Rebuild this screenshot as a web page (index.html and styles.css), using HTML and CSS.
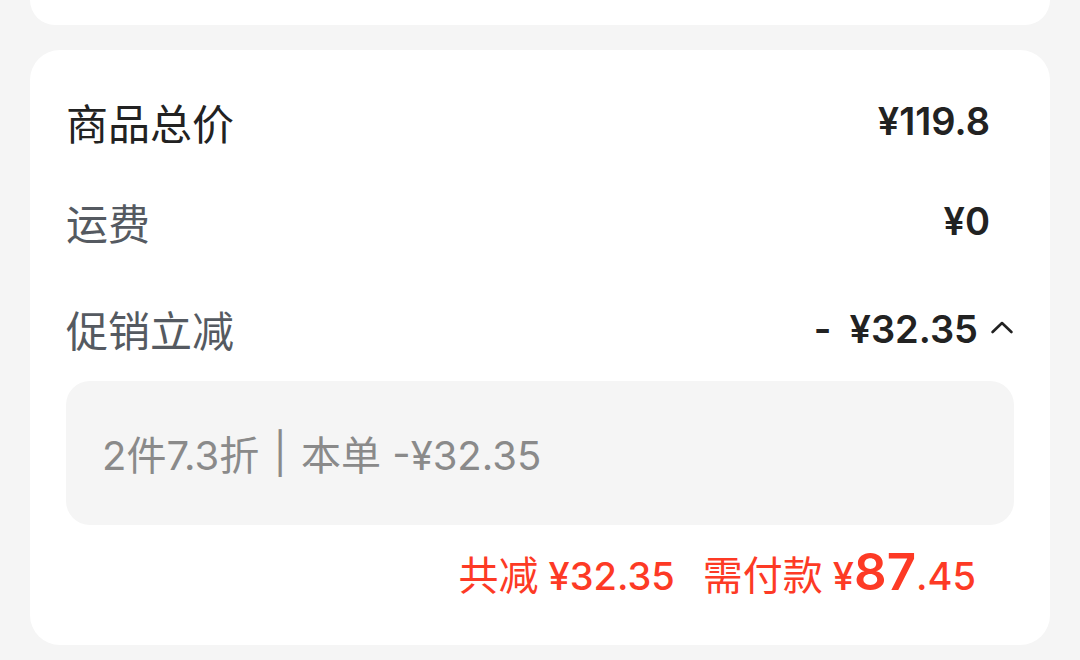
FILE: index.html
```html
<!DOCTYPE html>
<html lang="zh">
<head>
<meta charset="utf-8">
<link rel="stylesheet" href="styles.css">
</head>
<body>
<div class="card-top"></div>
<div class="card">
  <div class="row row-first">
    <span class="label label-dark">商品总价</span>
    <span class="value">¥119.8</span>
  </div>
  <div class="row">
    <span class="label">运费</span>
    <span class="value">¥0</span>
  </div>
  <div class="row row-promo">
    <span class="label">促销立减</span>
    <span class="value-wrap">
      <span class="value value-promo"><span class="minus">-</span>¥32.35</span>
      <svg class="chev" width="22" height="14" viewBox="0 0 22 14"><path d="M1.6 12 L11 3 L20.4 12" fill="none" stroke="#222" stroke-width="2.6" stroke-linecap="round" stroke-linejoin="round"/></svg>
    </span>
  </div>
  <div class="promo-box">2件7.3折 <span class="bar">|</span> 本单 -¥32.35</div>
  <div class="total">
    <span class="t-label">共减</span><span class="t-num">¥32.35</span>
    <span class="t-label t-gap">需付款</span><span class="t-num">¥<span class="t-big">87</span>.45</span>
  </div>
</div>
</body>
</html>
```
FILE: styles.css
```css
* { box-sizing: border-box; }
html, body { margin: 0; padding: 0; }
body {
  background: #f5f5f5;
  width: 1080px;
  height: 660px;
  overflow: hidden;
  font-family: Inter, "Noto Sans CJK SC", sans-serif;
}
.card-top {
  margin: 0 30px;
  height: 25px;
  background: #fff;
  border-radius: 0 0 30px 30px;
}
.card {
  margin: 25px 30px 0;
  background: #fff;
  border-radius: 30px;
  padding: 21px 36px 0;
  height: 595px;
}
.row {
  display: flex;
  justify-content: space-between;
  align-items: center;
  height: 100px;
  padding-right: 24px;
}
.row-promo {
  height: 107px;
  padding-top: 8px;
  padding-right: 1px;
}
.label {
  font-family: "Noto Sans CJK SC", sans-serif;
  font-size: 42px;
  color: #555a61;
}
.label-dark { color: #222; }
.value {
  font-family: Inter, "Noto Sans CJK SC", sans-serif;
  font-size: 38px;
  font-weight: 600;
  color: #222;
}
.minus { margin-right: 18px; }
.value-wrap {
  display: flex;
  align-items: center;
  gap: 13px;
}
.chev { display: block; margin-top: -3px; }
.promo-box {
  margin-top: 3px;
  height: 144px;
  background: #f5f5f5;
  border-radius: 24px;
  display: flex;
  align-items: center;
  padding-left: 36px;
  font-family: Inter, "Noto Sans CJK SC", sans-serif;
  font-size: 40px;
  color: #8a8a8a;
  white-space: pre;
}
.bar { margin: 0 3px; }
.total {
  display: flex;
  justify-content: flex-end;
  align-items: baseline;
  padding-right: 38px;
  margin-top: 16px;
  color: #fd3a25;
}
.t-label {
  font-family: "Noto Sans CJK SC", sans-serif;
  font-size: 40px;
  margin-right: 10px;
}
.t-gap { margin-left: 28px; }
.t-num {
  font-family: Inter, "Noto Sans CJK SC", sans-serif;
  font-size: 38px;
  font-weight: 500;
}
.t-big { font-size: 51px; font-weight: 600; }
```
